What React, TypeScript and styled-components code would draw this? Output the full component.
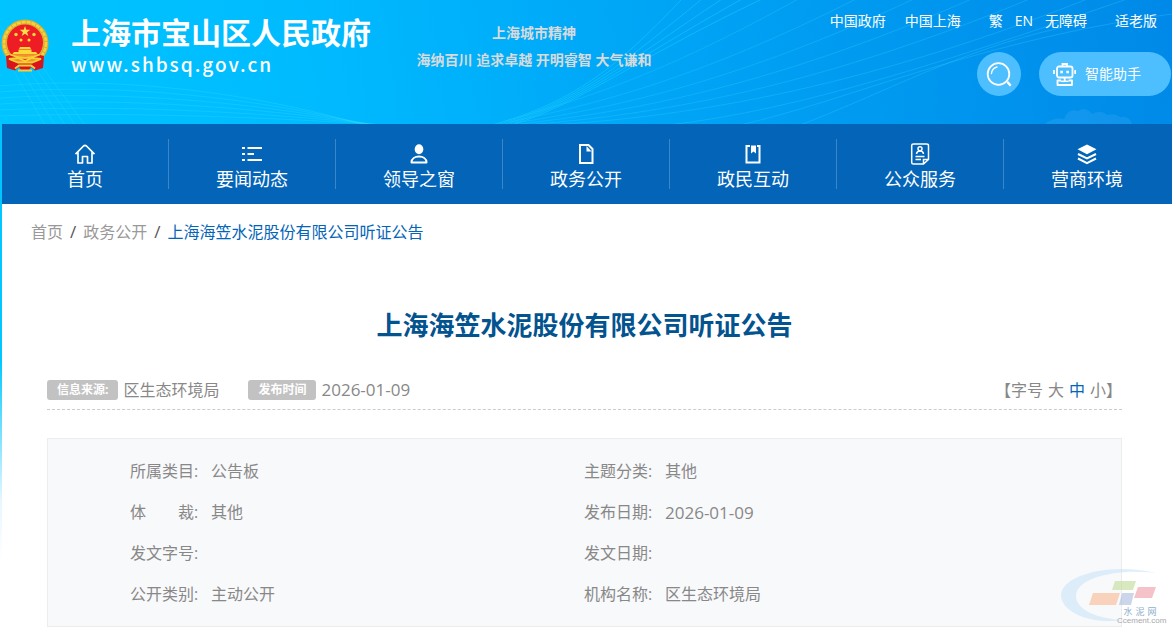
import React from "react";
import styled, { createGlobalStyle, css } from "styled-components";

const GlobalStyle = createGlobalStyle`
  * { box-sizing: border-box; }
  body {
    margin: 0;
    background: #fff;
    font-family: "Open Sans", "Noto Sans CJK SC", sans-serif;
    font-size: 16px;
    line-height: 24px;
    color: #888;
  }
  a { color: inherit; text-decoration: none; }
  button {
    border: 0;
    padding: 0;
    background: none;
    color: inherit;
    font: inherit;
    cursor: pointer;
  }
  h1, p, dl, dd, ol { margin: 0; padding: 0; }
`;

const Page = styled.div`
  position: relative;
  padding-left: 2px;
  background: linear-gradient(180deg, #00c4ff 0, #00c8ff 360px, #e6f6ff 500px, #fff 560px);
`;

const Header = styled.header`
  position: relative;
  display: flex;
  justify-content: space-between;
  height: 124px;
  margin-left: -2px;
  padding-left: 1px;
  overflow: hidden;
  color: #fff;
  background: linear-gradient(82deg, #00c4ff 0%, #00bcff 25%, #00a9f8 50%, #0099f0 75%, #0089e8 100%);
`;

const Waves = styled.svg`
  position: absolute;
  inset: 0;
  width: 100%;
  height: 100%;
`;

const Brand = styled.a`
  position: relative;
  display: flex;
  flex: 4 1 0;
  gap: 22px;
  padding-top: 12px;
`;

const EmblemBox = styled.span`
  padding-top: 7px;
  svg { display: block; }
`;

const SiteName = styled.span`
  display: block;
  font: 700 30px/38px "Noto Sans CJK SC", sans-serif;
  white-space: nowrap;
`;

const SiteUrl = styled.span`
  display: block;
  font: 500 19px/28px "Noto Sans CJK SC", sans-serif;
  letter-spacing: 2px;
`;

const Slogan = styled.div`
  position: relative;
  padding-top: 19px;
  text-align: center;
  font-size: 14px;
  font-weight: 700;
  line-height: 27px;
  color: #d8dadc;
  white-space: nowrap;
`;

const HeaderSide = styled.div`
  position: relative;
  display: flex;
  flex: 5 1 0;
  flex-direction: column;
  align-items: flex-end;
  gap: 21px;
  padding: 11px 1px 0 0;
`;

const TopLinks = styled.nav`
  display: flex;
  gap: 28px;
  padding-right: 14px;
  font-size: 14px;
  line-height: 20px;
  white-space: nowrap;
`;

const LinkGroup = styled.span<{ $gap: number }>`
  display: flex;
  gap: ${(p) => p.$gap}px;
`;

const Actions = styled.div`
  display: flex;
  gap: 18px;
`;

const actionSurface = css`
  display: flex;
  align-items: center;
  height: 44px;
  border-radius: 22px;
  background: #4dbfff;
  color: #fff;
`;

const SearchButton = styled.button`
  ${actionSurface}
  justify-content: center;
  width: 44px;
`;

const AssistantButton = styled.button`
  ${actionSurface}
  gap: 9px;
  padding: 0 30px 0 14px;
  font-size: 14px;
`;

const MainNav = styled.nav`
  display: flex;
  height: 80px;
  padding: 15px 1px 15px 0;
  background: #0364b8;
  color: #fff;
`;

const NavItem = styled.a`
  display: flex;
  flex: 1 1 0;
  flex-direction: column;
  align-items: center;
  gap: 1px;
  height: 50px;
  padding-top: 4px;
  font-size: 18px;
  line-height: 26px;
  border-right: 1px solid #3a86c8;
  &:last-child { border-right-color: transparent; }
  svg { display: block; flex: none; }
`;

const Main = styled.main`
  padding: 16px 50px 4px 45px;
  background: #fff;
`;

const Breadcrumb = styled.ol`
  display: flex;
  gap: 7px;
  margin-left: -16px;
  list-style: none;
  color: #999;
  li { display: flex; gap: 7px; }
  li + li::before { content: "/"; color: #555; font-size: 17px; }
  [aria-current] { color: #0364b8; }
`;

const Title = styled.h1`
  padding: 62px 0 24px;
  text-align: center;
  font-size: 26px;
  line-height: 38px;
  color: #03538f;
`;

const MetaBar = styled.div`
  display: flex;
  justify-content: space-between;
  align-items: center;
  height: 42px;
  padding-top: 2px;
  border-bottom: 1px dashed #ccc;
  margin-bottom: 28px;
`;

const MetaItems = styled.div`
  display: flex;
  gap: 29px;
`;

const MetaItem = styled.span`
  display: flex;
  align-items: center;
  gap: 5px;
`;

const Tag = styled.span`
  padding: 0 10px;
  border-radius: 3px;
  background: #c2c2c2;
  color: #fff;
  font-size: 12px;
  font-weight: 700;
  line-height: 20px;
`;

const DateText = styled.time`
  font-size: 17px;
`;

const SizePicker = styled.div`
  display: flex;
  gap: 5px;
`;

const SizeButton = styled.button<{ $active?: boolean }>`
  color: ${(p) => (p.$active ? "#0364b8" : "inherit")};
`;

const InfoBox = styled.dl`
  display: grid;
  grid-template-columns: 1fr 1fr;
  padding: 12px 83px 11px 82px;
  border: 1px solid #ececec;
  background: #f8f9fb;
`;

const InfoRow = styled.div`
  display: flex;
  line-height: 41px;
  height: 41px;
  dt { width: 81px; white-space: pre; }
`;

const Watermark = styled.div`
  position: absolute;
  right: 6px;
  bottom: 5px;
  width: 108px;
  height: 58px;
  pointer-events: none;
  svg { display: block; }
`;

const Emblem = () => (
  <svg width="48" height="54" viewBox="0 0 48 54" aria-hidden="true">
    <circle cx="24" cy="24" r="23.5" fill="#d9b030" />
    <circle cx="24" cy="24" r="21" fill="none" stroke="#f2d23f" strokeWidth="2.500" strokeDasharray="4 1" />
    <path d="M5 37 12 35 24 42 36 35 43 37 42 49 34 51.500 30 48 28 51H20L18 48 14 51.500 6 49Z" fill="#d9141e" />
    <circle cx="24" cy="23.5" r="18" fill="#ee1c25" />
    <path d="m24 7 1.300 3.800h4l-3.200 2.400 1.200 3.800-3.300-2.300-3.300 2.300 1.200-3.800-3.200-2.400h4Z" fill="#ffe04a" />
    <g fill="#ffd83a">
      <circle cx="15" cy="15.500" r="1.700" />
      <circle cx="33" cy="15.500" r="1.700" />
      <circle cx="20" cy="21" r="1.500" />
      <circle cx="28" cy="21" r="1.500" />
      <path d="M19 28h10l1 2H18ZM17.500 30.500h13v2.500H35l2 2.500H11l2-2.500h4.500Z" />
    </g>
    <path d="M9 35.500q15 7 30 0M8 40l9-1 7 3 7-3 9 1-9 3.500H17Z" fill="#f0952c" stroke="#f6cf35" strokeWidth="1.800" />
    <path d="M14 49.500l4-3h12l4 3M17 51.500h14" fill="none" stroke="#f6cf35" strokeWidth="2" />
  </svg>
);

const HeaderWaves = () => (
  <Waves viewBox="0 0 1172 124" preserveAspectRatio="none" fill="none" aria-hidden="true">
    <g stroke="#3fe0ff" strokeOpacity=".25">
      {[0, 1, 2, 3, 4, 5].map((i) => (
        <path key={i} d={`M0 ${86 + i * 6}C90 ${78 + i * 7} 220 ${84 + i * 6} ${365 + i * 4} 125`} />
      ))}
      {[0, 1, 2, 3, 4].map((i) => (
        <path key={i} d={`M${-20 + i * 9} ${14 + i * 4}Q${18 + i * 8} 78 ${45 + i * 10} 125`} />
      ))}
    </g>
    <g stroke="#17d0ff" strokeOpacity=".5">
      {[0, 1, 2, 3, 4].map((i) => (
        <path
          key={i}
          d={`M${492 + i * 5} 125C${575 + i * 2} 102 ${618 + i * 3} ${66 - i} ${682 + i * 20} -1`}
        />
      ))}
    </g>
    <g stroke="#2fc6ff" strokeOpacity=".35">
      {[0, 1, 2, 3, 4, 5].map((i) => (
        <path
          key={i}
          d={`M${505 + i * 5} ${121 + i}C${580 + i * 14} ${100 + i * 4} ${660 + i * 34} ${76 + i * 5} ${800 + i * 58} -2`}
        />
      ))}
      <path d="M668 125C800 110 950 60 1130-2M740 125C850 100 980 40 1172 14M800 125C880 95 960 50 1060 28" />
    </g>
    <path d="M1045 124q9-7 19-5 4-11 14-8 8-5 14 3 9-5 15 1 8-2 13 2 9-2 12 7Z" fill="#54b8f4" fillOpacity=".2" />
  </Waves>
);

const SearchGlyph = () => (
  <svg width="26" height="26" viewBox="0 0 26 26" fill="none" stroke="#fff" strokeLinecap="round" aria-hidden="true">
    <circle cx="12.500" cy="13" r="10.800" strokeWidth="1.800" />
    <path d="M5.500 12.500A7.500 7.500 0 0 1 11 6" strokeWidth="1.300" />
    <path d="m22 21.500 2 2.500" strokeWidth="2.400" />
  </svg>
);

const RobotGlyph = () => (
  <svg width="23" height="23" viewBox="0 0 23 23" fill="none" stroke="#fff" strokeWidth="1.800" aria-hidden="true">
    <rect x="4" y="3.500" width="15.500" height="11" rx="2" />
    <path d="M9.500 3V1H14v2M1 7v4M22.200 7v4M11.700 14.500v3.500" />
    <path d="M8 17.500H4.500V22H19v-4.500h-3.500" strokeLinejoin="round" />
    <path d="M8 18.300h7.500" strokeWidth="1.500" />
    <path d="M7.300 9h2.700M13.300 9H16" strokeWidth="2.700" />
  </svg>
);

const icons = {
  home: (
    <path d="M1.500 11.200 9.500 3Q11 1.800 12.500 3l8 8.200M4 9.200V20h4.500v-6.500h5V20H18V9.200" fill="none" stroke="#fff" strokeWidth="1.700" strokeLinejoin="round" />
  ),
  list: (
    <path d="M1 5h3M6.500 5H21M1 11h3M6.500 11H13M1 17h3M6.500 17H21" stroke="#fff" strokeWidth="2" />
  ),
  person: (
    <>
      <ellipse cx="11" cy="6.300" rx="4.300" ry="5" fill="#fff" />
      <path d="M3.500 19.500c0-8 15-8 15 0Z" fill="none" stroke="#fff" strokeWidth="2" strokeLinejoin="round" />
    </>
  ),
  file: (
    <>
      <path d="M5 2h8.500L17.500 6v14H5Z" fill="none" stroke="#fff" strokeWidth="2" />
      <path d="M11.500 3v5.500h5Z" fill="#fff" />
    </>
  ),
  book: (
    <>
      <path d="M8 3H4.500v16.500H17.500V3H15" fill="none" stroke="#fff" strokeWidth="2" />
      <path d="M9 2.500h5v8l-2.500-2L9 10.500Z" fill="#fff" />
    </>
  ),
  card: (
    <g fill="none" stroke="#fff" strokeWidth="1.500">
      <path d="M14.500 21H4.500Q2.700 21 2.700 19.500V2.500Q2.700 1 4.500 1h13Q19.500 1 19.500 2.500V16.500ZM14.500 21v-4.500h5" />
      <circle cx="11" cy="5.800" r="2" />
      <path d="M7.500 11q.3-3 3.500-3t3.500 3M6.500 13.500h9M6.500 16.500h5.500" />
    </g>
  ),
  layers: (
    <>
      <path d="m11 1.500 9.500 4.800-9.500 5-9.500-5Z" fill="#fff" />
      <path d="m2 11 9 4.500 9-4.500M2 15.500l9 4.700 9-4.700" fill="none" stroke="#fff" strokeWidth="2" />
    </>
  ),
};

const navItems: { label: string; icon: keyof typeof icons }[] = [
  { label: "首页", icon: "home" },
  { label: "要闻动态", icon: "list" },
  { label: "领导之窗", icon: "person" },
  { label: "政务公开", icon: "file" },
  { label: "政民互动", icon: "book" },
  { label: "公众服务", icon: "card" },
  { label: "营商环境", icon: "layers" },
];

const details: { label: string; value: string }[] = [
  { label: "所属类目:", value: "公告板" },
  { label: "主题分类:", value: "其他" },
  { label: "体\u3000\u3000裁:", value: "其他" },
  { label: "发布日期:", value: "2026-01-09" },
  { label: "发文字号:", value: "" },
  { label: "发文日期:", value: "" },
  { label: "公开类别:", value: "主动公开" },
  { label: "机构名称:", value: "区生态环境局" },
];

export default function App() {
  return (
    <Page>
      <GlobalStyle />
      <Header>
        <HeaderWaves />
        <Brand href="#">
          <EmblemBox>
            <Emblem />
          </EmblemBox>
          <span>
            <SiteName>上海市宝山区人民政府</SiteName>
            <SiteUrl>www.shbsq.gov.cn</SiteUrl>
          </span>
        </Brand>
        <Slogan>
          <p>上海城市精神</p>
          <p>海纳百川 追求卓越 开明睿智 大气谦和</p>
        </Slogan>
        <HeaderSide>
          <TopLinks>
            <LinkGroup $gap={19}>
              <a href="#">中国政府</a>
              <a href="#">中国上海</a>
            </LinkGroup>
            <LinkGroup $gap={12}>
              <a href="#">繁</a>
              <a href="#">EN</a>
              <a href="#">无障碍</a>
            </LinkGroup>
            <a href="#">适老版</a>
          </TopLinks>
          <Actions>
            <SearchButton type="button" aria-label="搜索">
              <SearchGlyph />
            </SearchButton>
            <AssistantButton type="button">
              <RobotGlyph />
              智能助手
            </AssistantButton>
          </Actions>
        </HeaderSide>
      </Header>

      <MainNav>
        {navItems.map((item) => (
          <NavItem href="#" key={item.label}>
            <svg width="22" height="22" viewBox="0 0 22 22" aria-hidden="true">
              {icons[item.icon]}
            </svg>
            {item.label}
          </NavItem>
        ))}
      </MainNav>

      <Main>
        <Breadcrumb>
          <li><a href="#">首页</a></li>
          <li><a href="#">政务公开</a></li>
          <li><a href="#" aria-current="page">上海海笠水泥股份有限公司听证公告</a></li>
        </Breadcrumb>

        <Title>上海海笠水泥股份有限公司听证公告</Title>

        <MetaBar>
          <MetaItems>
            <MetaItem>
              <Tag>信息来源:</Tag>
              区生态环境局
            </MetaItem>
            <MetaItem>
              <Tag>发布时间</Tag>
              <DateText>2026-01-09</DateText>
            </MetaItem>
          </MetaItems>
          <SizePicker>
            <span>【字号</span>
            <SizeButton type="button">大</SizeButton>
            <SizeButton type="button" $active>中</SizeButton>
            <span>
              <SizeButton type="button">小</SizeButton>】
            </span>
          </SizePicker>
        </MetaBar>

        <InfoBox>
          {details.map((d) => (
            <InfoRow key={d.label}>
              <dt>{d.label}</dt>
              <dd>{/^\d/.test(d.value) ? <DateText>{d.value}</DateText> : d.value}</dd>
            </InfoRow>
          ))}
        </InfoBox>
      </Main>

      <Watermark>
        <svg width="108" height="58" viewBox="0 0 108 58" overflow="visible">
          <path d="M98 5C50-6 4 8 3 27c0 17 30 30 62 25C40 51 18 42 18 28 18 10 58 0 98 5Z" fill="#c9e2f8" fillOpacity=".6" />
          <path d="M57 13h21l-3 9H54Z" fill="#c5dd9c" fillOpacity=".65" />
          <path d="M80 19h18l-4 11H76Z" fill="#ef9aa5" fillOpacity=".6" />
          <path d="M35 25h27l-4 12H31Z" fill="#f7bd98" fillOpacity=".65" />
          <path d="M64 25h12l-3 12H61Z" fill="#a9bade" fillOpacity=".6" />
          <g fontFamily="Noto Sans CJK SC, sans-serif" fontSize="9" fill="#8fb0cc" textAnchor="middle">
            <text x="70" y="47">水</text>
            <text x="82" y="47">泥</text>
            <text x="94" y="47">网</text>
          </g>
          <text x="59" y="55" fontFamily="Liberation Sans, sans-serif" fontSize="8" fill="#a8a8ac">Ccement.com</text>
        </svg>
      </Watermark>
    </Page>
  );
}
